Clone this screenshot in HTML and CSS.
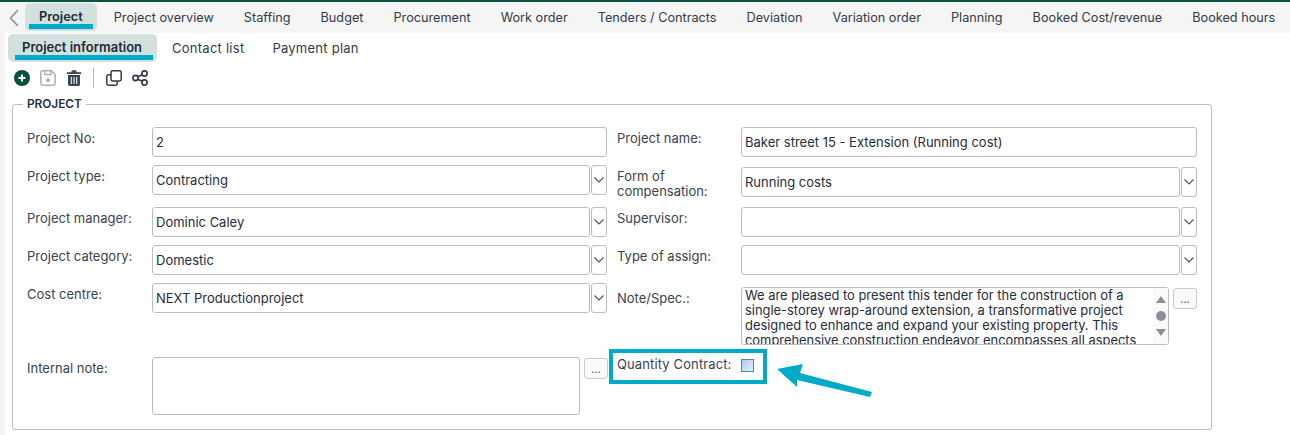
FILE: index.html
```html
<!DOCTYPE html>
<html lang="en">
<head>
<meta charset="utf-8">
<title>Project</title>
<link rel="stylesheet" href="styles.css">
</head>
<body>
<div class="page">
  <nav class="tabs">
    <svg class="back" width="12" height="18" viewBox="0 0 12 18"><path d="M10 1 2.500 9l7.500 8" fill="none" stroke="#8a8f98" stroke-width="1.600"/></svg>
    <a class="tab active">Project<i class="mark"></i></a>
    <a class="tab">Project overview</a>
    <a class="tab">Staffing</a>
    <a class="tab">Budget</a>
    <a class="tab">Procurement</a>
    <a class="tab">Work order</a>
    <a class="tab">Tenders / Contracts</a>
    <a class="tab">Deviation</a>
    <a class="tab">Variation order</a>
    <a class="tab">Planning</a>
    <a class="tab">Booked Cost/revenue</a>
    <a class="tab">Booked hours</a>
  </nav>
  <main class="content">
    <div class="subtabs">
      <a class="sub active">Project information<i class="mark"></i></a>
      <a class="sub">Contact list</a>
      <a class="sub">Payment plan</a>
    </div>
    <div class="toolbar">
      <svg width="16" height="16" viewBox="0 0 16 16"><circle cx="8" cy="8" r="8" fill="#0b4f3f"/><path d="M8 4.500v7M4.500 8h7" stroke="#fff" stroke-width="2"/></svg>
      <svg width="16" height="16" viewBox="0 0 16 16"><path d="M2.500.8h9L15.200 4.500v9a1.700 1.700 0 0 1-1.700 1.700h-11A1.700 1.700 0 0 1 .8 13.500v-11A1.700 1.700 0 0 1 2.500.8Z" fill="none" stroke="#a9aeb8" stroke-width="1.500"/><path d="M4.500 1.200v3.300h6.500V1.200" fill="none" stroke="#a9aeb8" stroke-width="1.300"/><circle cx="8" cy="10.200" r="1.900" fill="#a9aeb8"/></svg>
      <svg width="16" height="16" viewBox="0 0 16 16"><path d="M.8 2.200h14.400v1.800H.8ZM5.200 2.200 6 .3h4l.8 1.900Z" fill="#3a4657"/><path d="M2 5h12v9.300A1.700 1.700 0 0 1 12.300 16H3.700A1.700 1.700 0 0 1 2 14.300Z" fill="#3a4657"/><path d="M5.300 7v7M8 7v7M10.700 7v7" stroke="#fff" stroke-width="1"/></svg>
      <span class="divider"></span>
      <svg width="16" height="16" viewBox="0 0 16 16"><rect x="5" y=".8" width="10.200" height="10.200" rx="1.700" fill="none" stroke="#333b48" stroke-width="1.500"/><path d="M5 4.800H2.500A1.700 1.700 0 0 0 .8 6.500v7A1.700 1.700 0 0 0 2.500 15.200h7a1.700 1.700 0 0 0 1.700-1.700V11" fill="none" stroke="#333b48" stroke-width="1.500"/></svg>
      <svg width="16" height="16" viewBox="0 0 16 16"><circle cx="3.500" cy="8" r="2.600" fill="none" stroke="#333b48" stroke-width="1.600"/><circle cx="12.500" cy="3.500" r="2.600" fill="none" stroke="#333b48" stroke-width="1.600"/><circle cx="12.500" cy="12.500" r="2.600" fill="none" stroke="#333b48" stroke-width="1.600"/><path d="M5.800 6.800 10.200 4.700M5.800 9.200l4.400 2.100" stroke="#333b48" stroke-width="1.600"/></svg>
    </div>
    <fieldset class="panel">
      <legend>PROJECT</legend>
      <div class="columns">
        <div class="col col-left">
          <div class="row"><label>Project No:</label><div class="input">2</div></div>
          <div class="row gap8"><label>Project type:</label><div class="input">Contracting</div><span class="drop"><svg width="12" height="8" viewBox="0 0 12 8"><path d="M1.500 1.500 6 6l4.500-4.500" fill="none" stroke="#4a5360" stroke-width="1.200"/></svg></span></div>
          <div class="row gap12"><label>Project manager:</label><div class="input">Dominic Caley</div><span class="drop"><svg width="12" height="8" viewBox="0 0 12 8"><path d="M1.500 1.500 6 6l4.500-4.500" fill="none" stroke="#4a5360" stroke-width="1.200"/></svg></span></div>
          <div class="row gap8"><label>Project category:</label><div class="input">Domestic</div><span class="drop"><svg width="12" height="8" viewBox="0 0 12 8"><path d="M1.500 1.500 6 6l4.500-4.500" fill="none" stroke="#4a5360" stroke-width="1.200"/></svg></span></div>
          <div class="row gap8"><label>Cost centre:</label><div class="input">NEXT Productionproject</div><span class="drop"><svg width="12" height="8" viewBox="0 0 12 8"><path d="M1.500 1.500 6 6l4.500-4.500" fill="none" stroke="#4a5360" stroke-width="1.200"/></svg></span></div>
          <div class="row gap44"><label>Internal note:</label><div class="input internal"></div><button class="more">...</button></div>
        </div>
        <div class="col col-right">
          <div class="row"><label>Project name:</label><div class="input">Baker street 15 - Extension (Running cost)</div></div>
          <div class="row gap10"><label class="two-line">Form of compensation:</label><div class="input">Running costs</div><span class="drop"><svg width="12" height="8" viewBox="0 0 12 8"><path d="M1.500 1.500 6 6l4.500-4.500" fill="none" stroke="#4a5360" stroke-width="1.200"/></svg></span></div>
          <div class="row gap10"><label>Supervisor:</label><div class="input"></div><span class="drop"><svg width="12" height="8" viewBox="0 0 12 8"><path d="M1.500 1.500 6 6l4.500-4.500" fill="none" stroke="#4a5360" stroke-width="1.200"/></svg></span></div>
          <div class="row gap8"><label>Type of assign:</label><div class="input"></div><span class="drop"><svg width="12" height="8" viewBox="0 0 12 8"><path d="M1.500 1.500 6 6l4.500-4.500" fill="none" stroke="#4a5360" stroke-width="1.200"/></svg></span></div>
          <div class="row gap12"><label>Note/Spec.:</label><div class="input note"><div class="note-text">We are pleased to present this tender for the construction of a single-storey wrap-around extension, a transformative project designed to enhance and expand your existing property. This comprehensive construction endeavor encompasses all aspects</div><div class="scroll"><svg width="10" height="44" viewBox="0 0 10 44"><path d="M5 2 10 9H0Z" fill="#8c8f96"/><circle cx="5" cy="22" r="5" fill="#8c8f96"/><path d="M5 42 10 35H0Z" fill="#8c8f96"/></svg></div></div><button class="more">...</button></div>
          <div class="row qty"><label class="qty-label">Quantity Contract:</label><span class="check"></span><span class="callout"></span></div>
        </div>
      </div>
    </fieldset>
    <svg class="arrow" width="100" height="40" viewBox="0 0 100 40"><path d="M1 7 27 2 24 11 96 30 94 35 21 18 21 25Z" fill="#00abca"/></svg>
  </main>
</div>
</body>
</html>
```

FILE: styles.css
```css
* { box-sizing: border-box; }
html, body { margin: 0; padding: 0; }
body {
  width: 1290px;
  height: 435px;
  overflow: hidden;
  background: #fff;
  font-family: "Inter", "Noto Sans", sans-serif;
  font-size: 13px;
  color: #2b3340;
}
.page { height: 435px; border-top: 2px solid #0b5444; background: #f5f5f5; display: flex; flex-direction: column; overflow: hidden; }
.tabs { height: 31px; display: flex; align-items: flex-start; padding-left: 8px; }
.back { margin-top: 7px; flex: none; }
.tab { position: relative; white-space: nowrap; height: 28px; margin-top: 1px; padding: 7px 15px 0; color: #333b48; font-size: 12.700px; }
.tab.active { background: #d3e1de; border-radius: 5px; margin-left: 5px; margin-right: 2px; padding: 6px 14px 0; color: #222a36; font-weight: 600; font-size: 12.800px; }
.mark { position: absolute; height: 5px; background: #00abca; left: 4px; right: 4px; bottom: 2px; }
.content { position: relative; flex: 1; margin-left: 5px; background: #fff; }
.subtabs { height: 30px; display: flex; padding: 1px 0 0 3px; }
.sub { position: relative; height: 28px; white-space: nowrap; padding: 6px 14px 0; color: #333b48; letter-spacing: .25px; }
.sub.active { background: #d3e1de; border-radius: 5px; color: #222a36; font-weight: 600; letter-spacing: 0; padding: 5px 15px 0 14px; margin-right: 1px; }
.sub.active .mark { left: 7px; right: 4px; }
.toolbar { height: 25px; display: flex; align-items: center; gap: 10px; padding: 5px 0 0 9px; }
.divider { width: 1px; height: 20px; background: #b5b9c0; margin: 0 2px 0 1px; }
.panel { margin: 10px 0 0 7px; width: 1200px; height: 332px; border: 1px solid #b7bcc6; border-radius: 3px; padding: 0; min-width: 0; }
legend { margin-left: 10px; padding: 0 4px; font-size: 11.800px; font-weight: 600; line-height: 12px; color: #2a3240; }
.columns { display: flex; padding: 17px 0 0 14px; }
.col { display: flex; flex-direction: column; flex: none; }
.col-left { width: 580px; }
.col-right { width: 580px; margin-left: 10px; }
.col-right label { width: 124px; }
.row { position: relative; display: flex; align-items: flex-start; flex: none; }
.gap8 { margin-top: 8px; }
.gap10 { margin-top: 10px; }
.gap12 { margin-top: 12px; }
.gap44 { margin-top: 44px; }
label { flex: none; width: 125px; padding-top: 3px; line-height: 16px; color: #3b4350; }
.col-right .two-line { height: 30px; padding-top: 2px; line-height: 15px; }
.input { flex: 1; height: 30px; min-width: 0; border: 1px solid #b9bcca; border-radius: 3px; background: #fff; padding: 6px 3px 0; line-height: 17px; color: #262e3b; white-space: nowrap; }
.drop { flex: none; width: 16px; height: 30px; margin-left: 1px; border: 1px solid #b9bcca; border-radius: 3px; display: flex; align-items: center; justify-content: center; }
.internal { flex: none; width: 428px; height: 58px; }
.more { flex: none; margin: 1px 0 0 4px; width: 24px; height: 21px; padding: 0; border: 1px solid #c8cacf; border-radius: 3px; background: #fafafa; color: #555; font-size: 11px; line-height: 14px; font-family: inherit; }
.note { flex: none; width: 428px; height: 58px; padding: 0 0 0 3px; display: flex; overflow: hidden; line-height: 15px; white-space: normal; }
.note-text { width: 408px; flex: none; font-size: 12.900px; height: 56px; overflow: hidden; }
.scroll { flex: none; width: 15px; height: 56px; padding: 6px 0 0 3px; background: #fafafa; }
.scroll svg { display: block; }
.qty { margin-top: 13px; height: 20px; }
.col-right .qty-label { width: auto; padding-top: 0; margin-top: -2px; letter-spacing: .12px; }
.check { flex: none; width: 13px; height: 13px; margin: 1px 0 0 10px; border: 1px solid #4e8aa8; background: linear-gradient(135deg, #a9cbe9, #e6f1fb); }
.callout { position: absolute; left: -8px; top: -9px; width: 158px; height: 35px; border: 4px solid #00abca; }
.arrow { position: absolute; left: 771px; top: 329px; }
```
